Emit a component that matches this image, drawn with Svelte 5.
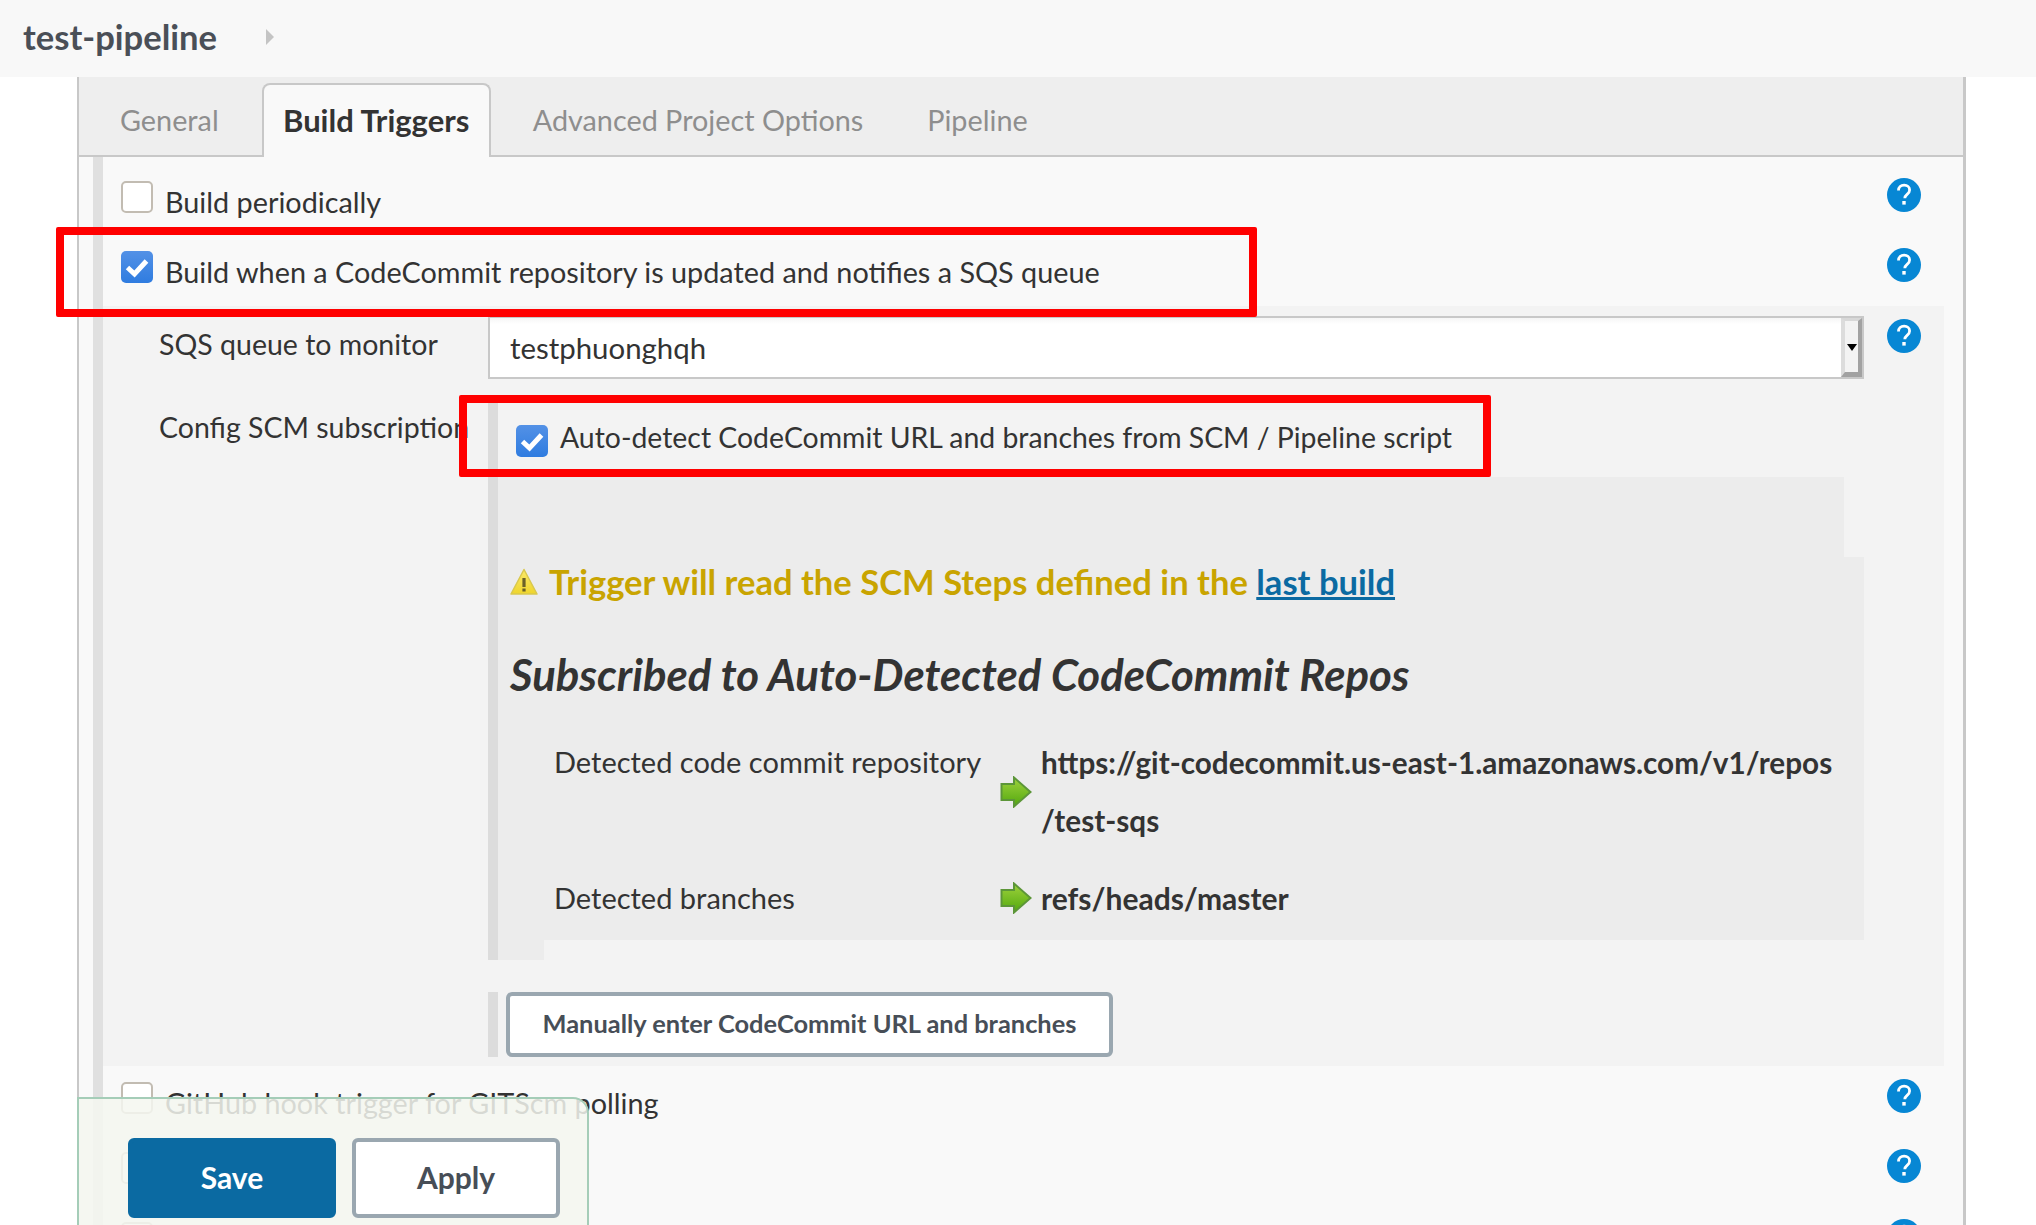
<script>
  const tabs = [
    { label: "General" },
    { label: "Build Triggers", active: true },
    { label: "Advanced Project Options" },
    { label: "Pipeline" }
  ];
</script>

{#snippet help()}
  <svg class="help" viewBox="0 0 34 34" aria-hidden="true">
    <circle cx="17" cy="17" r="17" fill="#0787d4" />
    <path d="M11.5 12.5c0-3.400 2.400-5.300 5.600-5.300 3.300 0 5.500 1.900 5.500 4.700 0 2-1 3.200-2.500 4.400-1.500 1.200-2.300 2-2.300 3.900" fill="none" stroke="#fff" stroke-width="2.800" />
    <rect x="15.300" y="23" width="3.400" height="3.600" fill="#fff" />
  </svg>
{/snippet}

{#snippet check(checked)}
  {#if checked}
    <svg class="box" viewBox="0 0 32 32" aria-hidden="true">
      <defs>
        <linearGradient id="blue" x1="0" y1="0" x2="0" y2="1">
          <stop offset="0" stop-color="#5391e6" />
          <stop offset="1" stop-color="#2f7ce0" />
        </linearGradient>
      </defs>
      <rect width="32" height="32" rx="5" fill="url(#blue)" />
      <path d="M6.500 16.500l7 6.500L25.500 10" fill="none" stroke="#fff" stroke-width="5" />
    </svg>
  {:else}
    <span class="box empty"></span>
  {/if}
{/snippet}

{#snippet arrow()}
  <svg class="arrow" viewBox="0 0 32 32" aria-hidden="true">
    <defs>
      <linearGradient id="green" x1="0" y1="0" x2="0" y2="1">
        <stop offset="0" stop-color="#9ed23c" />
        <stop offset="1" stop-color="#52a80e" />
      </linearGradient>
    </defs>
    <path d="M1.500 8h12.500V1.500L30.500 16 14 30.500V24H1.500z" fill="url(#green)" stroke="#5c9638" stroke-width="2" />
  </svg>
{/snippet}

<div class="page">
  <header class="top">
    <span class="crumb">test-pipeline</span>
    <span class="caret"></span>
  </header>

  <main class="panel">
    <nav class="tabs">
      {#each tabs as tab}
        <span class="tab" class:active={tab.active}>{tab.label}</span>
      {/each}
    </nav>

    <div class="section">
      <div class="row">
        {@render check(false)}
        <span class="label">Build periodically</span>
        {@render help()}
      </div>
      <div class="row tall">
        {@render check(true)}
        <span class="label">Build when a CodeCommit repository is updated and notifies a SQS queue</span>
        {@render help()}
      </div>

      <div class="detail">
        <div class="field">
          <div class="name sqs">SQS queue to monitor</div>
          <div class="select">
            <span class="value">testphuonghqh</span>
            <span class="spin"><i></i></span>
          </div>
          {@render help()}
        </div>

        <div class="field scm">
          <div class="name config">Config SCM subscription</div>
          <div class="scm-body">
            <div class="strip-block">
              <div class="auto">
                {@render check(true)}
                <span class="label">Auto-detect CodeCommit URL and branches from SCM / Pipeline script</span>
              </div>
              <div class="grey top-part"></div>
              <div class="grey main-part">
                <div class="warn">
                  <svg class="warn-icon" viewBox="0 0 28 28" aria-hidden="true">
                    <defs>
                      <linearGradient id="amber" x1="0" y1="0" x2="0" y2="1">
                        <stop offset="0" stop-color="#fbe96a" />
                        <stop offset="1" stop-color="#efd52c" />
                      </linearGradient>
                    </defs>
                    <path d="M14 1.500L27 26H1z" fill="url(#amber)" stroke="#d9c84e" stroke-width="1.500" stroke-linejoin="round" />
                    <rect x="12.400" y="10" width="3.200" height="9" fill="#6b6128" />
                    <rect x="12.400" y="20.500" width="3.200" height="3" fill="#6b6128" />
                  </svg>
                  <span>Trigger will read the SCM Steps defined in the <a href="#top">last build</a></span>
                </div>
                <h2>Subscribed to Auto-Detected CodeCommit Repos</h2>
                <div class="detected">
                  <span class="k first">Detected code commit repository</span>
                  <span class="arrow-cell">{@render arrow()}</span>
                  <span class="v url">https://git-codecommit.us-east-1.amazonaws.com/v1/repos<br />/test-sqs</span>
                  <span class="k">Detected branches</span>
                  <span class="arrow-cell">{@render arrow()}</span>
                  <span class="v refs">refs/heads/master</span>
                </div>
              </div>
              <div class="grey foot"></div>
            </div>
            <div class="manual">
              <button type="button" class="btn small">Manually enter CodeCommit URL and branches</button>
            </div>
          </div>
        </div>
      </div>

      <div class="row after">
        {@render check(false)}
        <span class="label">GitHub hook trigger for GITScm polling</span>
        {@render help()}
      </div>
      <div class="row after">
        {@render check(false)}
        {@render help()}
      </div>
      <div class="row after">
        {@render check(false)}
        {@render help()}
      </div>
    </div>
  </main>

  <div class="mark one"></div>
  <div class="mark two"></div>

  <div class="savebar">
    <button type="button" class="btn save">Save</button>
    <button type="button" class="btn apply">Apply</button>
  </div>
</div>

<style>
  :global(body) {
    margin: 0;
    background: #fff;
  }

  .page {
    position: relative;
    height: 1225px;
    overflow: hidden;
    font-family: Lato, "Noto Sans", sans-serif;
    font-size: 28.8px;
    color: #333;
  }

  .top {
    height: 77px;
    background: #f8f8f8;
    display: flex;
    align-items: center;
    padding-left: 23px;
  }
  .crumb {
    font-size: 34.6px;
    line-height: 40px;
    font-weight: 700;
    color: #4a4f57;
    width: 243px;
    margin-bottom: 3px;
  }
  .caret {
    width: 0;
    height: 0;
    border-left: 8px solid #c4c4c4;
    border-top: 8px solid transparent;
    border-bottom: 8px solid transparent;
    margin-bottom: 3px;
  }

  .panel {
    margin-left: 77px;
    width: 1884px;
    height: 1148px;
    border-left: 2px solid #c8c8c8;
    border-right: 3px solid #c8c8c8;
    background: #f9f9f9;
  }

  .tabs {
    height: 78px;
    background: #eee;
    border-bottom: 2px solid #c8c8c8;
    display: flex;
    align-items: flex-end;
    padding-left: 9px;
  }
  .tab {
    height: 71px;
    box-sizing: border-box;
    padding: 19px 32px 0;
    color: #8e8e8e;
    white-space: nowrap;
    font-size: 28.8px;
  }
  .tab.active {
    height: 74px;
    width: 229px;
    padding: 17px 0 0;
    text-align: center;
    margin: 0 10px -2px 11px;
    background: #f9f9f9;
    border: 2px solid #c8c8c8;
    border-bottom: 0;
    border-radius: 8px 8px 0 0;
    color: #333;
    font-size: 31px;
    line-height: 36px;
    font-weight: 700;
  }

  .section {
    margin-left: 14px;
    border-left: 10px solid #e0e0e0;
  }

  .row {
    height: 70px;
    box-sizing: border-box;
    padding: 24px 42px 0 18px;
    display: flex;
    align-items: flex-start;
  }
  .row.tall {
    height: 79px;
  }
  .row.after {
    padding-top: 16px;
  }
  .label {
    margin-left: 12px;
    line-height: 36px;
    margin-top: 3px;
    white-space: nowrap;
  }
  .box {
    flex: none;
    width: 32px;
    height: 32px;
    box-sizing: border-box;
    display: block;
  }
  .box.empty {
    background: #fff;
    border: 2px solid #c2bcb2;
    border-radius: 5px;
  }
  .help {
    width: 34px;
    height: 34px;
    flex: none;
    margin-left: auto;
    margin-top: -3px;
    display: block;
  }
  .detail {
    width: 1841px;
    height: 760px;
    background: #f3f3f3;
    box-sizing: border-box;
    padding-top: 10px;
  }

  .field {
    display: flex;
    align-items: flex-start;
  }
  .name {
    width: 385px;
    flex: none;
    padding-left: 56px;
    box-sizing: border-box;
    white-space: nowrap;
    font-size: 28.5px;
  }
  .name.sqs {
    line-height: 36px;
    padding-top: 10px;
  }
  .name.config {
    padding-top: 14px;
    line-height: 36px;
  }

  .select {
    width: 1376px;
    height: 63px;
    box-sizing: border-box;
    border: 2px solid #c8c8c8;
    background: linear-gradient(#f6f6f6, #fff 6px);
    display: flex;
    align-items: center;
    justify-content: space-between;
  }
  .value {
    padding-left: 20px;
    font-size: 29.4px;
  }
  .spin {
    width: 21px;
    height: 59px;
    box-sizing: border-box;
    border-style: solid;
    border-width: 3px 4px 5px 4px;
    border-color: #d8d8d8 #a2a2a2 #a2a2a2 #dcdcdc;
    background: #f3f3f3;
    display: flex;
    align-items: center;
    justify-content: center;
  }
  .spin i {
    border-top: 7px solid #000;
    border-left: 5px solid transparent;
    border-right: 5px solid transparent;
    margin-top: 1px;
  }
  .field .help {
    margin-left: 23px;
    margin-top: 3px;
  }

  .scm {
    margin-top: 16px;
  }
  .scm-body {
    width: 1376px;
    flex: none;
  }
  .strip-block {
    border-left: 10px solid #dcdcdc;
    height: 565px;
  }
  .auto {
    height: 82px;
    display: flex;
    box-sizing: border-box;
    padding: 30px 0 0 18px;
    background: #f3f3f3;
  }
  .auto .label {
    margin-top: -6px;
    font-size: 28.4px;
  }
  .grey {
    background: #ececec;
  }
  .top-part {
    height: 80px;
    width: 1346px;
  }
  .main-part {
    height: 383px;
    box-sizing: border-box;
    padding-left: 12px;
  }
  .foot {
    height: 20px;
    width: 46px;
  }

  .warn {
    display: flex;
    align-items: center;
    font-weight: 700;
    font-size: 34.6px;
    color: #c9a400;
    height: 48px;
  }
  .warn-icon {
    width: 28px;
    height: 28px;
    margin-right: 11px;
    margin-top: 1px;
  }
  .warn a {
    color: #0b6aa2;
    text-decoration: underline;
  }
  h2 {
    margin: 44px 0 0;
    font-size: 43.7px;
    line-height: 50px;
    font-style: italic;
    font-weight: 700;
    color: #333;
  }
  .detected {
    display: grid;
    grid-template-columns: 446px 41px 1fr;
    margin-top: 34px;
    margin-left: 44px;
    row-gap: 19px;
    font-size: 29px;
  }
  .k {
    line-height: 58px;
  }
  .k.first {
    align-self: start;
  }
  .arrow-cell {
    display: flex;
    align-items: center;
  }
  .arrow {
    width: 32px;
    height: 32px;
    display: block;
  }
  .v {
    font-weight: 700;
    line-height: 58px;
    white-space: nowrap;
  }
  .v.url {
    font-size: 29.7px;
    padding-top: 1px;
  }
  .v.refs {
    font-size: 30px;
  }

  .manual {
    border-left: 10px solid #dcdcdc;
    margin-top: 32px;
    height: 65px;
    padding-left: 8px;
  }

  .btn {
    font-family: inherit;
    font-weight: 700;
    box-sizing: border-box;
    border-radius: 6px;
    background: #fff;
    border: 4px solid #9aa7b0;
    color: #474e57;
    padding: 0;
    display: block;
  }
  .btn.small {
    width: 607px;
    height: 65px;
    font-size: 25.4px;
    padding-bottom: 4px;
  }

  .mark {
    position: absolute;
    box-sizing: border-box;
    border: 8px solid #f00;
    border-radius: 2px;
  }
  .mark.one {
    left: 56px;
    top: 227px;
    width: 1201px;
    height: 90px;
  }
  .mark.two {
    left: 459px;
    top: 395px;
    width: 1032px;
    height: 82px;
  }

  .savebar {
    position: absolute;
    left: 77px;
    top: 1097px;
    width: 512px;
    height: 140px;
    box-sizing: border-box;
    border: 2px solid #a5cdb8;
    border-radius: 0 16px 0 0;
    background: rgba(244, 247, 240, 0.85);
    padding: 39px 0 0 49px;
    display: flex;
    gap: 16px;
    align-items: flex-start;
  }
  .save,
  .apply {
    width: 208px;
    height: 80px;
    font-size: 30px;
    padding-bottom: 2px;
  }
  .save {
    background: #0b6aa2;
    border-color: #0b6aa2;
    color: #fff;
  }
</style>
